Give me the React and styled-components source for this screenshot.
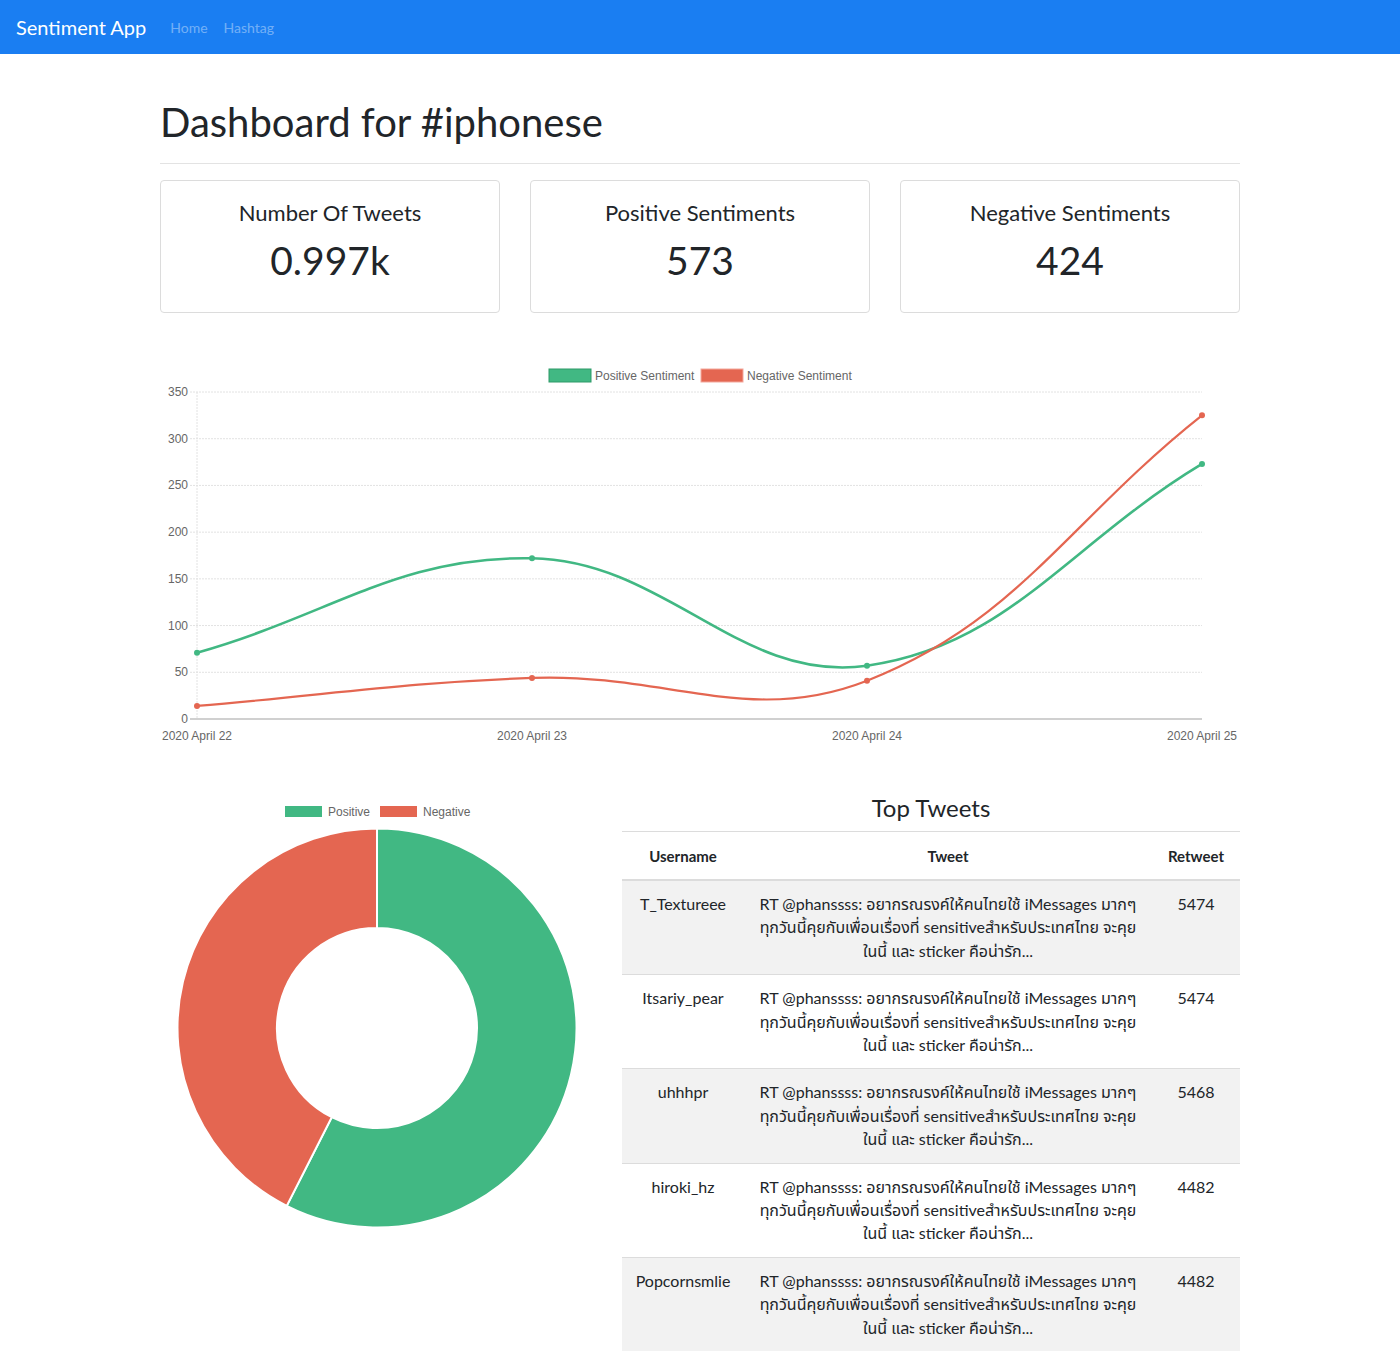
import React from "react";
import styled, { createGlobalStyle } from "styled-components";

const GREEN = "#41B883";
const RED = "#E46651";

const GlobalStyle = createGlobalStyle`
  body {
    margin: 0;
    background: #fff;
    font-family: "Lato", "Noto Sans", "Noto Sans Thai", "DejaVu Sans", sans-serif;
    color: #212529;
  }
`;

const NavBar = styled.nav`
  height: 54px;
  background: #1a7ef2;
  display: flex;
  align-items: center;
  padding: 0 16px;
`;

const Brand = styled.div`
  color: #fff;
  font-size: 20px;
  margin-right: 24px;
`;

const NavLink = styled.a`
  color: rgba(255, 255, 255, 0.4);
  font-size: 14px;
  margin-right: 16px;
  text-decoration: none;
`;

const Container = styled.div`
  width: 1080px;
  margin: 0 auto;
  padding-bottom: 20px;
`;

const Title = styled.h1`
  font-size: 40px;
  font-weight: 400;
  line-height: 48px;
  margin: 44px 0 0;
`;

const Rule = styled.hr`
  border: 0;
  border-top: 1px solid #e3e3e3;
  margin: 17px 0 16px;
`;

const CardRow = styled.div`
  display: grid;
  grid-template-columns: repeat(3, 1fr);
  gap: 30px;
`;

const Card = styled.div`
  height: 133px;
  border: 1px solid #dcdcdc;
  border-radius: 4px;
  display: flex;
  flex-direction: column;
  align-items: center;
  padding-top: 17px;
  box-sizing: border-box;
`;

const CardTitle = styled.div`
  font-size: 22px;
  line-height: 30px;
`;

const CardValue = styled.div`
  font-size: 39px;
  line-height: 48px;
  margin-top: 8px;
`;

const LineWrap = styled.div`
  margin-top: 44px;
  height: 392px;
`;

const LowerRow = styled.div`
  display: grid;
  grid-template-columns: 432px 618px;
  gap: 30px;
  margin-top: 40px;
`;

const TableTitle = styled.h3`
  font-size: 24px;
  font-weight: 400;
  text-align: center;
  line-height: 34px;
  margin: 2px 0 6px;
`;

const Table = styled.table`
  width: 100%;
  border-collapse: collapse;
  border-top: 1px solid #dcdcdc;
`;

const Th = styled.th`
  font-size: 15px;
  font-weight: 700;
  padding: 12px 8px 11px;
  line-height: 24px;
  border-bottom: 2px solid #dcdcdc;
  width: ${(p) => p.w || "auto"};
`;

const Tr = styled.tr`
  background: ${(p) => (p.striped ? "#f2f2f2" : "#fff")};
  border-top: 1px solid #dcdcdc;
`;

const Td = styled.td`
  font-size: 16px;
  line-height: 23.4px;
  text-align: center;
  vertical-align: top;
  padding: 11px 6px 12px;
  color: #212529;
`;

const TweetLine = styled.span`
  display: block;
  white-space: nowrap;
`;

const TWEET_LINES = [
  "RT @phanssss: อยากรณรงค์ให้คนไทยใช้ iMessages มากๆ",
  "ทุกวันนี้คุยกับเพื่อนเรื่องที่ sensitiveสำหรับประเทศไทย จะคุย",
  "ในนี้ และ sticker คือน่ารัก...",
];

const tweets = [
  { user: "T_Textureee", rt: 5474 },
  { user: "Itsariy_pear", rt: 5474 },
  { user: "uhhhpr", rt: 5468 },
  { user: "hiroki_hz", rt: 4482 },
  { user: "Popcornsmlie", rt: 4482 },
];

// chart geometry (svg coords, origin at container left / chart top)
const X0 = 37;
const X1 = 1042;
const Y0 = 362;
const YTOP = 35;
const yScale = (v) => Y0 - (v / 350) * (Y0 - YTOP);
const labels = ["2020 April 22", "2020 April 23", "2020 April 24", "2020 April 25"];
const positive = [71, 172, 57, 273];
const negative = [14, 44, 41, 325];

function toPoints(data) {
  return data.map((v, i) => ({
    x: X0 + (i * (X1 - X0)) / (data.length - 1),
    y: yScale(v),
  }));
}

function splinePath(pts, t = 0.4) {
  const cps = pts.map((p, i) => {
    const prev = pts[i - 1] || p;
    const next = pts[i + 1] || p;
    const d01 = Math.hypot(p.x - prev.x, p.y - prev.y);
    const d12 = Math.hypot(next.x - p.x, next.y - p.y);
    let s01 = d01 / (d01 + d12);
    let s12 = d12 / (d01 + d12);
    if (isNaN(s01)) s01 = 0;
    if (isNaN(s12)) s12 = 0;
    const fa = t * s01;
    const fb = t * s12;
    return {
      px: p.x - fa * (next.x - prev.x),
      py: p.y - fa * (next.y - prev.y),
      nx: p.x + fb * (next.x - prev.x),
      ny: p.y + fb * (next.y - prev.y),
    };
  });
  let d = `M${pts[0].x},${pts[0].y}`;
  for (let i = 1; i < pts.length; i++) {
    d += ` C${cps[i - 1].nx},${cps[i - 1].ny} ${cps[i].px},${cps[i].py} ${pts[i].x},${pts[i].y}`;
  }
  return d;
}

function LineChart() {
  const pos = toPoints(positive);
  const neg = toPoints(negative);
  const ticks = [0, 50, 100, 150, 200, 250, 300, 350];
  return (
    <svg width="1080" height="392" fontFamily="'Liberation Sans', Arial, sans-serif">
      <rect x="389" y="12" width="42" height="13" fill={GREEN} stroke="#2e9a68" strokeWidth="1" />
      <text x="435" y="23" fontSize="12" fill="#666">Positive Sentiment</text>
      <rect x="541" y="12" width="42" height="13" fill={RED} stroke="#f3a79c" strokeWidth="1" />
      <text x="587" y="23" fontSize="12" fill="#666">Negative Sentiment</text>
      {ticks.map((t) => (
        <g key={t}>
          <line
            x1="30"
            x2={X1}
            y1={yScale(t)}
            y2={yScale(t)}
            stroke={t === 0 ? "#d0d0d0" : "#e2e2e2"}
            strokeWidth={t === 0 ? 2 : 1}
            strokeDasharray={t === 0 ? "none" : "2 1"}
          />
          <text x="28" y={yScale(t) + 4} fontSize="12" fill="#666" textAnchor="end">
            {t}
          </text>
        </g>
      ))}
      <line x1={X0} x2={X0} y1={YTOP} y2={Y0} stroke="#e2e2e2" strokeDasharray="2 1" />
      {labels.map((l, i) => (
        <text
          key={l}
          x={X0 + (i * (X1 - X0)) / 3}
          y={Y0 + 21}
          fontSize="12"
          fill="#666"
          textAnchor="middle"
        >
          {l}
        </text>
      ))}
      <path d={splinePath(pos)} fill="none" stroke={GREEN} strokeWidth="2.6" />
      <path d={splinePath(neg)} fill="none" stroke={RED} strokeWidth="2.2" />
      {pos.map((p, i) => (
        <circle key={"p" + i} cx={p.x} cy={p.y} r="3" fill={GREEN} />
      ))}
      {neg.map((p, i) => (
        <circle key={"n" + i} cx={p.x} cy={p.y} r="3" fill={RED} />
      ))}
    </svg>
  );
}

function arcPath(cx, cy, r0, r1, a0, a1) {
  const pt = (r, a) => [cx + r * Math.sin(a), cy - r * Math.cos(a)];
  const large = a1 - a0 > Math.PI ? 1 : 0;
  const [ox0, oy0] = pt(r1, a0);
  const [ox1, oy1] = pt(r1, a1);
  const [ix1, iy1] = pt(r0, a1);
  const [ix0, iy0] = pt(r0, a0);
  return `M${ox0},${oy0} A${r1},${r1} 0 ${large} 1 ${ox1},${oy1} L${ix1},${iy1} A${r0},${r0} 0 ${large} 0 ${ix0},${iy0} Z`;
}

function Doughnut() {
  const total = 573 + 424;
  const split = (573 / total) * Math.PI * 2;
  const cx = 217;
  const cy = 239;
  return (
    <svg width="432" height="446" fontFamily="'Liberation Sans', Arial, sans-serif">
      <rect x="125" y="17" width="37" height="11" fill={GREEN} />
      <text x="168" y="27" fontSize="12" fill="#666">Positive</text>
      <rect x="220" y="17" width="37" height="11" fill={RED} />
      <text x="263" y="27" fontSize="12" fill="#666">Negative</text>
      <path d={arcPath(cx, cy, 100, 199.5, 0, split)} fill={GREEN} stroke="#fff" strokeWidth="2" />
      <path
        d={arcPath(cx, cy, 100, 199.5, split, Math.PI * 2)}
        fill={RED}
        stroke="#fff"
        strokeWidth="2"
      />
    </svg>
  );
}

export default function App() {
  return (
    <>
      <GlobalStyle />
      <NavBar>
        <Brand>Sentiment App</Brand>
        <NavLink>Home</NavLink>
        <NavLink>Hashtag</NavLink>
      </NavBar>
      <Container>
        <Title>Dashboard for #iphonese</Title>
        <Rule />
        <CardRow>
          <Card>
            <CardTitle>Number Of Tweets</CardTitle>
            <CardValue>0.997k</CardValue>
          </Card>
          <Card>
            <CardTitle>Positive Sentiments</CardTitle>
            <CardValue>573</CardValue>
          </Card>
          <Card>
            <CardTitle>Negative Sentiments</CardTitle>
            <CardValue>424</CardValue>
          </Card>
        </CardRow>
        <LineWrap>
          <LineChart />
        </LineWrap>
        <LowerRow>
          <Doughnut />
          <div>
            <TableTitle>Top Tweets</TableTitle>
            <Table>
              <thead>
                <tr>
                  <Th w="106px">Username</Th>
                  <Th>Tweet</Th>
                  <Th w="72px">Retweet</Th>
                </tr>
              </thead>
              <tbody>
                {tweets.map((t, i) => (
                  <Tr key={t.user} striped={i % 2 === 0}>
                    <Td>{t.user}</Td>
                    <Td>
                      {TWEET_LINES.map((line) => (
                        <TweetLine key={line}>{line}</TweetLine>
                      ))}
                    </Td>
                    <Td>{t.rt}</Td>
                  </Tr>
                ))}
              </tbody>
            </Table>
          </div>
        </LowerRow>
      </Container>
    </>
  );
}
